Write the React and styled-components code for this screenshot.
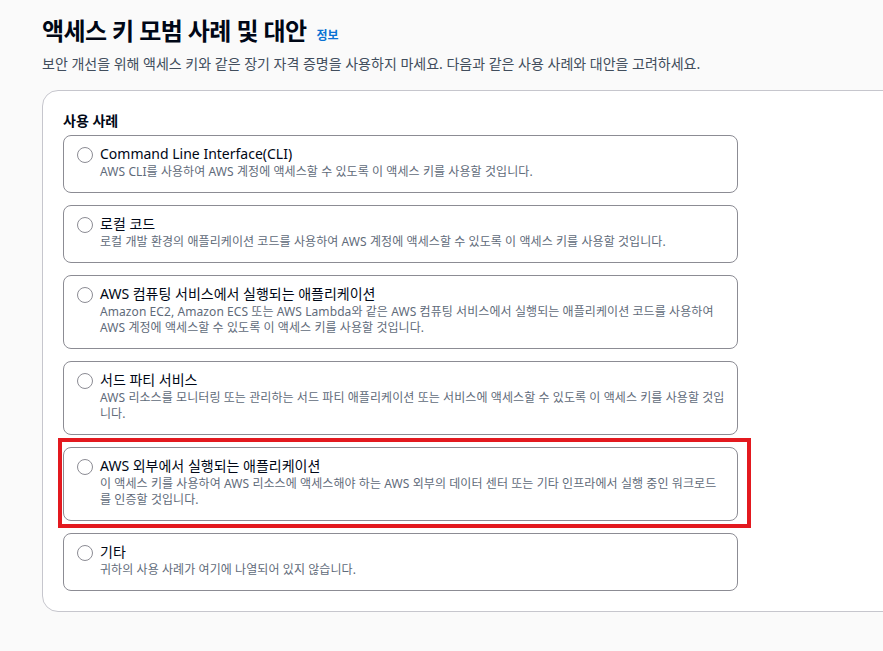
import React from 'react'
import styled, { createGlobalStyle } from 'styled-components'

const GlobalStyle = createGlobalStyle`
  body {
    margin: 0;
    background: #fafafa;
    font-family: "Noto Sans", "Noto Sans CJK KR", sans-serif;
    color: #000716;
    overflow: hidden;
  }
`

const options = [
  {
    label: 'Command Line Interface(CLI)',
    desc: 'AWS CLI를 사용하여 AWS 계정에 액세스할 수 있도록 이 액세스 키를 사용할 것입니다.',
  },
  {
    label: '로컬 코드',
    desc: '로컬 개발 환경의 애플리케이션 코드를 사용하여 AWS 계정에 액세스할 수 있도록 이 액세스 키를 사용할 것입니다.',
  },
  {
    label: 'AWS 컴퓨팅 서비스에서 실행되는 애플리케이션',
    desc: 'Amazon EC2, Amazon ECS 또는 AWS Lambda와 같은 AWS 컴퓨팅 서비스에서 실행되는 애플리케이션 코드를 사용하여 AWS 계정에 액세스할 수 있도록 이 액세스 키를 사용할 것입니다.',
  },
  {
    label: '서드 파티 서비스',
    desc: 'AWS 리소스를 모니터링 또는 관리하는 서드 파티 애플리케이션 또는 서비스에 액세스할 수 있도록 이 액세스 키를 사용할 것입니다.',
  },
  {
    label: 'AWS 외부에서 실행되는 애플리케이션',
    desc: '이 액세스 키를 사용하여 AWS 리소스에 액세스해야 하는 AWS 외부의 데이터 센터 또는 기타 인프라에서 실행 중인 워크로드를 인증할 것입니다.',
    marked: true,
  },
  {
    label: '기타',
    desc: '귀하의 사용 사례가 여기에 나열되어 있지 않습니다.',
  },
]

const App = () => {
  return (
    <Page>
      <GlobalStyle />
      <Header>
        <TitleRow>
          <Title>액세스 키 모범 사례 및 대안</Title>
          <InfoLink href="#">정보</InfoLink>
        </TitleRow>
        <Subtitle>
          보안 개선을 위해 액세스 키와 같은 장기 자격 증명을 사용하지 마세요. 다음과 같은 사용 사례와 대안을 고려하세요.
        </Subtitle>
      </Header>
      <Card>
        <GroupLabel>사용 사례</GroupLabel>
        <OptionList>
          {options.map((o) => (
            <Option key={o.label} $marked={o.marked}>
              <Radio type="radio" name="usecase" />
              <OptionText>
                <OptionLabel>{o.label}</OptionLabel>
                <OptionDesc>{o.desc}</OptionDesc>
              </OptionText>
            </Option>
          ))}
        </OptionList>
      </Card>
    </Page>
  )
}

export default App

const Page = styled.div`
  padding: 16px 0 0 42px;
  min-height: 651px;
  box-sizing: border-box;
`
const Header = styled.div`
  display: flex;
  flex-direction: column;
  gap: 8px;
  margin-bottom: 16px;
`
const TitleRow = styled.div`
  display: flex;
  align-items: baseline;
  gap: 10px;
`
const Title = styled.h1`
  margin: 0;
  font-size: 24px;
  line-height: 30px;
  font-weight: 700;
  letter-spacing: -0.6px;
`
const InfoLink = styled.a`
  font-size: 12px;
  font-weight: 700;
  color: #0972d3;
  text-decoration: none;
`
const Subtitle = styled.p`
  margin: 0;
  font-size: 14px;
  line-height: 20px;
  color: #414d5c;
`
const Card = styled.div`
  width: 900px;
  background: #ffffff;
  border: 1px solid #c6c6cd;
  border-radius: 16px;
  padding: 20px 0 20px 20px;
  box-sizing: border-box;
`
const GroupLabel = styled.div`
  font-size: 14px;
  line-height: 20px;
  font-weight: 700;
  margin-bottom: 4px;
`
const OptionList = styled.div`
  display: flex;
  flex-direction: column;
  gap: 12px;
  width: 675px;
`
const Option = styled.label`
  position: relative;
  display: flex;
  align-items: flex-start;
  gap: 7px;
  padding: 8px 11px 12px 13px;
  border: 1px solid #8c8c94;
  border-radius: 8px;
  background: #ffffff;
  cursor: pointer;

  &::after {
    content: '';
    display: ${(p) => (p.$marked ? 'block' : 'none')};
    position: absolute;
    top: -10px;
    left: -6px;
    right: -14px;
    bottom: -8px;
    border: 4px solid #e3191f;
    pointer-events: none;
  }
`
const Radio = styled.input`
  appearance: none;
  flex: none;
  width: 16px;
  height: 16px;
  margin: 3px 0 0 0;
  border: 1.5px solid #8c8c94;
  border-radius: 50%;
  box-sizing: border-box;
  background: #ffffff;
`
const OptionText = styled.div`
  display: flex;
  flex-direction: column;
`
const OptionLabel = styled.span`
  font-size: 14px;
  line-height: 20px;
  color: #000716;
`
const OptionDesc = styled.span`
  font-size: 12px;
  line-height: 16px;
  letter-spacing: 0.08px;
  color: #5f6b7a;
`
